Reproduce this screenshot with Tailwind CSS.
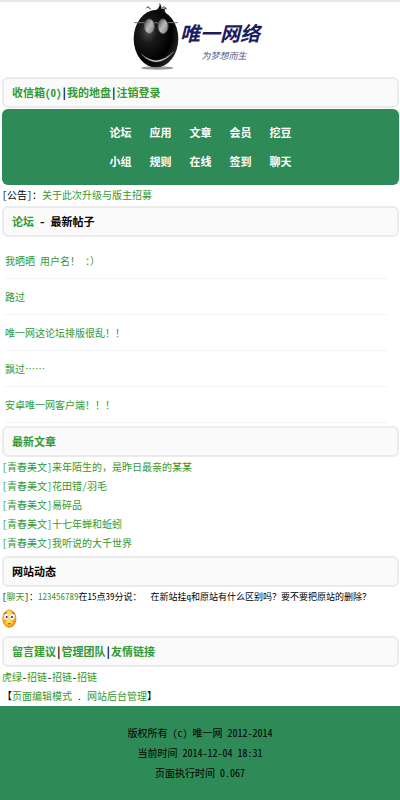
<!DOCTYPE html>
<html lang="zh-CN">
<head>
    <meta charset="UTF-8">
    <meta name="viewport" content="width=device-width, initial-scale=1.0">
    <title>唯一网络</title>
    <script src="https://cdn.jsdelivr.net/npm/@tailwindcss/browser@4"></script>
</head>
<body class="min-h-screen flex flex-col bg-white text-black text-[10px] leading-[19px] font-['Noto_Sans_Mono_CJK_SC','Noto_Sans_CJK_SC',monospace]">

<header class="flex justify-center h-[77px] border-t-2 border-gray-200 pr-2">
    <svg class="w-12 h-[72px] shrink-0" viewBox="36 6 144 216" aria-hidden="true">
        <defs>
            <radialGradient id="ball" cx="32%" cy="38%" r="70%">
                <stop offset="0" stop-color="#4a4a4a"/>
                <stop offset="0.3" stop-color="#181818"/>
                <stop offset="0.75" stop-color="#000"/>
                <stop offset="1" stop-color="#222"/>
            </radialGradient>
            <linearGradient id="lens" x1="0" y1="0" x2="1" y2="1">
                <stop offset="0" stop-color="#444"/>
                <stop offset="0.5" stop-color="#bbb"/>
                <stop offset="1" stop-color="#777"/>
            </linearGradient>
        </defs>
        <ellipse cx="112" cy="204" rx="48" ry="5" fill="#999"/>
        <path d="M92 34Q122 30 119 8Q126 20 125 27L138 25Q130 32 138 38Z" fill="#111"/>
        <ellipse cx="108" cy="116" rx="67" ry="86" fill="url(#ball)"/>
        <path d="M79 25Q85 15 91 28M126 25Q134 15 139 28" fill="none" stroke="#222" stroke-width="3"/>
        <path d="M64 162Q112 214 162 154Q112 204 64 162Z" fill="#ccc" stroke="#999" stroke-width="1"/>
        <path d="M42 68H74M102 70Q108 65 115 70M143 68H174" fill="none" stroke="#777" stroke-width="3"/>
        <ellipse cx="88" cy="79" rx="15" ry="22" fill="url(#lens)" stroke="#555" stroke-width="3"/>
        <ellipse cx="129" cy="79" rx="15" ry="22" fill="url(#lens)" stroke="#555" stroke-width="3"/>
    </svg>
    <div class="pt-4 text-[#1c1c5e] italic">
        <h1 class="text-[20px] leading-[30px] font-bold">唯一网络</h1>
        <p class="text-[9px] leading-4 text-center pl-2 text-[#55557d]">为梦想而生</p>
    </div>
</header>

<nav class="ml-0.5 mr-px h-[31px] px-2 flex items-center border-2 border-[#ebebeb] rounded-md bg-[#fafafa] text-[11px] font-bold">
    <a href="#" class="text-[#339933]">收信箱(0)</a>|<a href="#" class="text-[#339933]">我的地盘</a>|<a href="#" class="text-[#339933]">注销登录</a>
</nav>

<nav class="ml-0.5 mr-px mt-px h-[76px] flex justify-center rounded-md bg-[#2e8b57] text-white text-[11px] font-bold">
    <div class="grid grid-cols-5 gap-x-[18px] content-center leading-[29px]">
        <a href="#">论坛</a>
        <a href="#">应用</a>
        <a href="#">文章</a>
        <a href="#">会员</a>
        <a href="#">挖豆</a>
        <a href="#">小组</a>
        <a href="#">规则</a>
        <a href="#">在线</a>
        <a href="#">签到</a>
        <a href="#">聊天</a>
    </div>
</nav>

<p class="px-0.5 mb-0.5">[公告]：<a href="#" class="text-[#339933]">关于此次升级与版主招募</a></p>

<h2 class="ml-0.5 mr-px h-[31px] px-2 flex items-center border-2 border-[#ebebeb] rounded-md bg-[#fafafa] text-[11px] font-bold whitespace-pre"><a href="#" class="text-[#339933]">论坛</a> - 最新帖子</h2>
<ul class="pt-[6px] pb-[3px] pl-[5px] pr-3 text-[#339933]">
    <li class="h-9 flex items-center border-b border-gray-100"><a href="#">我晒晒 用户名！ ：）</a></li>
    <li class="h-9 flex items-center border-b border-gray-100"><a href="#">路过</a></li>
    <li class="h-9 flex items-center border-b border-gray-100"><a href="#">唯一网这论坛排版很乱！！</a></li>
    <li class="h-9 flex items-center border-b border-gray-100"><a href="#">飘过……</a></li>
    <li class="h-9 flex items-center border-b border-gray-100"><a href="#">安卓唯一网客户端！！！</a></li>
</ul>

<h2 class="ml-0.5 mr-px h-[31px] px-2 flex items-center border-2 border-[#ebebeb] rounded-md bg-[#fafafa] text-[11px] font-bold"><a href="#" class="text-[#339933]">最新文章</a></h2>
<ul class="px-0.5 pb-1 text-[#339933]">
    <li><a href="#">[青春美文]来年陌生的，是昨日最亲的某某</a></li>
    <li><a href="#">[青春美文]花田错/羽毛</a></li>
    <li><a href="#">[青春美文]易碎品</a></li>
    <li><a href="#">[青春美文]十七年蝉和蚯蚓</a></li>
    <li><a href="#">[青春美文]我听说的大千世界</a></li>
</ul>

<h2 class="ml-0.5 mr-px h-[31px] px-2 flex items-center border-2 border-[#ebebeb] rounded-md bg-[#fafafa] text-[11px] font-bold">网站动态</h2>
<div class="px-0.5 pb-2">
    <p class="text-[9px] mb-[3px]">[<a href="#" class="text-[#339933]">聊天</a>]：<a href="#" class="text-[#339933]">123456789</a>在15点39分说：&nbsp; 在新站挂q和原站有什么区别吗？要不要把原站的删除？</p>
    <svg class="w-[15px] h-[19px]" viewBox="0 0 45 57" role="img" aria-label="发呆">
        <defs>
            <radialGradient id="face" cx="45%" cy="40%" r="60%">
                <stop offset="0" stop-color="#fff27a"/>
                <stop offset="0.65" stop-color="#ffd32e"/>
                <stop offset="1" stop-color="#e58a12"/>
            </radialGradient>
        </defs>
        <ellipse cx="22" cy="29" rx="20" ry="26" fill="url(#face)" stroke="#cf7c15" stroke-width="2"/>
        <ellipse cx="13" cy="23" rx="7" ry="9" fill="#fff" stroke="#b98"/>
        <ellipse cx="31" cy="23" rx="7" ry="9" fill="#fff" stroke="#b98"/>
        <circle cx="14" cy="24" r="3" fill="#322"/>
        <circle cx="30" cy="24" r="3" fill="#322"/>
        <path d="M5 14L15 10M29 10L39 14" stroke="#a52" stroke-width="3"/>
        <ellipse cx="9" cy="37" rx="5" ry="3" fill="#ff9055"/>
        <ellipse cx="35" cy="37" rx="5" ry="3" fill="#ff9055"/>
        <ellipse cx="22" cy="44" rx="4" ry="2" fill="#9b4a12"/>
    </svg>
</div>

<nav class="ml-0.5 mr-px h-[31px] px-2 flex items-center border-2 border-[#ebebeb] rounded-md bg-[#fafafa] text-[11px] font-bold">
    <a href="#" class="text-[#339933]">留言建议</a>|<a href="#" class="text-[#339933]">管理团队</a>|<a href="#" class="text-[#339933]">友情链接</a>
</nav>
<p class="px-0.5"><a href="#" class="text-[#339933]">虎绿</a>-<a href="#" class="text-[#339933]">招链</a>-<a href="#" class="text-[#339933]">招链</a>-<a href="#" class="text-[#339933]">招链</a></p>
<p class="px-0.5 mb-px">【<a href="#" class="text-[#339933]">页面编辑模式</a> . <a href="#" class="text-[#339933]">网站后台管理</a>】</p>

<footer class="grow pt-[17px] pb-4 bg-[#2e8b57] text-center leading-5">
    <p>版权所有 (c) 唯一网 2012-2014</p>
    <p>当前时间 2014-12-04 18:31</p>
    <p>页面执行时间 0.067</p>
</footer>

</body>
</html>
